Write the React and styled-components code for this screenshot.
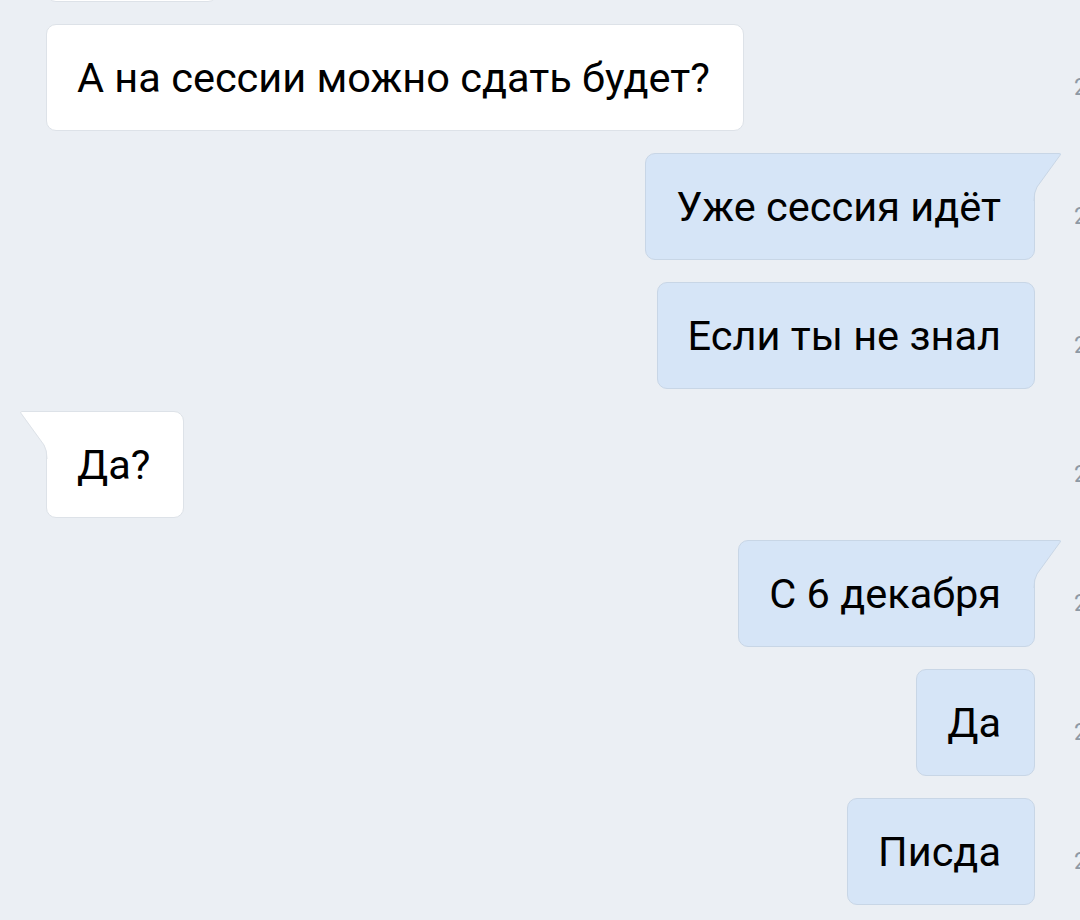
import React from "react";
import styled, { createGlobalStyle } from "styled-components";

const GlobalStyle = createGlobalStyle`
  html, body {
    margin: 0;
    padding: 0;
    background: #ebeff4;
    overflow: hidden;
  }
  body {
    font-family: Roboto, "Noto Sans", "Liberation Sans", sans-serif;
  }
`;

const messages = [
  { id: 0, out: false, tail: false, text: "Ну да", time: "22:14" },
  { id: 1, out: false, tail: false, text: "А на сессии можно сдать будет?", time: "22:14" },
  { id: 2, out: true, tail: true, text: "Уже сессия идёт", time: "22:15" },
  { id: 3, out: true, tail: false, text: "Если ты не знал", time: "22:15" },
  { id: 4, out: false, tail: true, text: "Да?", time: "22:15" },
  { id: 5, out: true, tail: true, text: "С 6 декабря", time: "22:16" },
  { id: 6, out: true, tail: false, text: "Да", time: "22:16" },
  { id: 7, out: true, tail: false, text: "Писда", time: "22:16" },
];

// bubble corner tail, drawn for the right side and mirrored for incoming
const Tail = ({ out }) => (
  <TailSvg $out={out} width="30" height="50" viewBox="0 0 30 50">
    <path
      d="M1 0 L26 0 Q28.5 0 27 2 L4 34 Q1 39 1 48 L1 0 Z"
      fill={out ? "#d6e5f7" : "#ffffff"}
    />
    <path
      d="M1 0.5 L26 0.5 Q28.5 0.5 27 2.3 L4 34 Q1 39 1 48"
      fill="none"
      stroke={out ? "#c8d6e6" : "#dde2e8"}
      strokeWidth="1"
    />
  </TailSvg>
);

export default function App() {
  return (
    <>
      <GlobalStyle />
      <Chat>
        {messages.map((m) => (
          <Row key={m.id}>
            <Bubble $out={m.out} $tail={m.tail}>
              {m.text}
              {m.tail && <Tail out={m.out} />}
            </Bubble>
            <Time>{m.time}</Time>
          </Row>
        ))}
      </Chat>
    </>
  );
}

const Chat = styled.div`
  width: 1160px;
  margin-top: -105px;
  display: flex;
  flex-direction: column;
  gap: 22px;
`;

const Row = styled.div`
  display: grid;
  grid-template-columns: 989px 80px;
  column-gap: 39px;
  padding-left: 46px;
  align-items: center;
`;

const Bubble = styled.div`
  position: relative;
  justify-self: ${(p) => (p.$out ? "end" : "start")};
  box-sizing: border-box;
  height: 107px;
  display: flex;
  align-items: center;
  padding: 0 33px 0 30px;
  font-size: 41.5px;
  line-height: 48px;
  color: #000;
  background: ${(p) => (p.$out ? "#d6e5f7" : "#ffffff")};
  border: 1px solid ${(p) => (p.$out ? "#c8d6e6" : "#dde2e8")};
  border-radius: 10px;
  ${(p) => (p.$tail && p.$out ? "border-top-right-radius: 0;" : "")}
  ${(p) => (p.$tail && !p.$out ? "border-top-left-radius: 0;" : "")}
`;

const TailSvg = styled.svg`
  position: absolute;
  top: -1px;
  ${(p) =>
    p.$out
      ? "left: calc(100% - 1px);"
      : "right: calc(100% - 1px); transform: scaleX(-1);"}
`;

const Time = styled.div`
  margin-top: 20px;
  font-size: 23px;
  color: #8e99a5;
  white-space: nowrap;
`;
